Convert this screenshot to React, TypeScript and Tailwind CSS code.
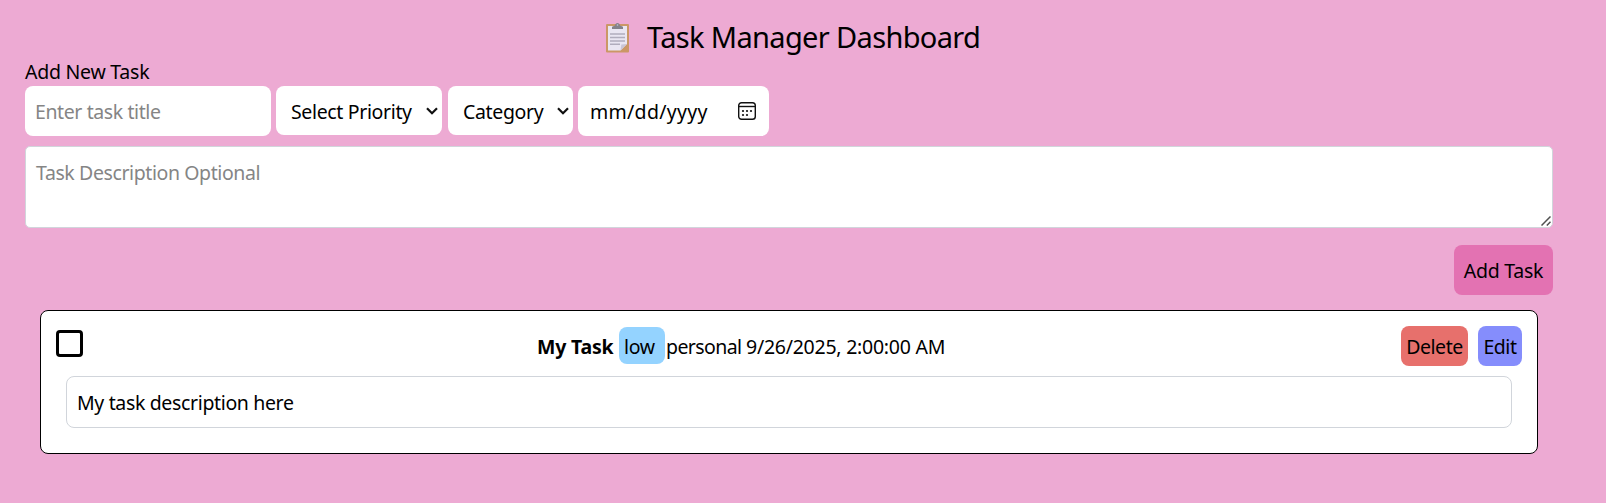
import React from 'react';

function ClipboardIcon() {
  return (
    <svg width="23" height="30" viewBox="0 0 23 30" className="shrink-0" aria-hidden="true">
      <rect x="0" y="1" width="23" height="28.500" rx="1" fill="#cb9766" />
      <path d="M2 3h19v18l-6.500 6.500H2z" fill="#e9e6f2" />
      <path d="M21 21l-6.500 6.500 0.800-6z" fill="#c9c5d6" />
      <path d="M6 6V3.800l3-1.200C9.200 1 10.200 0 11.500 0s2.300 1 2.500 2.600l3 1.200V6z" fill="#84828b" />
      <circle cx="11.500" cy="2" r="0.800" fill="#c9c5d6" />
      <path d="M4 11h15M4 14.500h15M4 18h15M4 21.300h10" stroke="#b0adbd" strokeWidth="1.400" />
    </svg>
  );
}

function Chevron() {
  return (
    <svg width="12" height="8" viewBox="0 0 12 8" className="shrink-0" aria-hidden="true">
      <path d="M1 1.200l5 5 5-5" fill="none" stroke="#101010" strokeWidth="2.200" />
    </svg>
  );
}

function CalendarIcon() {
  return (
    <svg width="18" height="18" viewBox="0 0 18 18" className="shrink-0" aria-hidden="true">
      <rect x="0.700" y="0.700" width="16.600" height="16.600" rx="2.800" fill="none" stroke="#111" strokeWidth="1.400" />
      <path d="M1 4.500h16" stroke="#111" strokeWidth="1.400" />
      <g fill="#111">
        <circle cx="5" cy="9" r="1.100" />
        <circle cx="9" cy="9" r="1.100" />
        <circle cx="13" cy="9" r="1.100" />
        <circle cx="5" cy="13" r="1.100" />
        <circle cx="9" cy="13" r="1.100" />
      </g>
    </svg>
  );
}

export default function App() {
  return (
    <main className="h-[503px] overflow-hidden bg-[#edaad3] pl-[25px] pr-[53px] pt-[19px] font-['Noto_Sans',sans-serif] text-[19.5px] leading-[30px] tracking-[-0.35px] text-black">
      <h1 className="flex h-[39px] items-start pl-[581px] text-[29px] leading-[36px] tracking-[-0.65px]">
        <span className="mt-[3.5px]"><ClipboardIcon /></span>
        <span className="ml-[18px] whitespace-nowrap">Task Manager Dashboard</span>
      </h1>
      <h2 className="h-[28px] leading-[28px] tracking-[-0.25px]">Add New Task</h2>
      <div className="flex h-[50px] items-start">
        <input
          className="h-[50px] w-[246px] rounded-lg bg-white px-[10px] pt-px tracking-[-0.4px] outline-none placeholder:text-[#858585]"
          placeholder="Enter task title"
        />
        <button className="ml-[5px] flex h-[49px] w-[166px] items-center justify-between rounded-lg bg-white pl-[15px] pr-[4px]">
          <span className="whitespace-nowrap pt-[2px]">Select Priority</span>
          <Chevron />
        </button>
        <button className="ml-[6px] flex h-[49px] w-[125px] items-center justify-between rounded-lg bg-white pl-[15px] pr-[4px]">
          <span className="pt-[2px]">Category</span>
          <Chevron />
        </button>
        <button className="ml-[5px] flex h-[50px] w-[191px] items-center justify-between rounded-lg bg-white pl-[12px] pr-[13px]">
          <span className="pt-[2px] tracking-[0.3px]">mm/dd/yyyy</span>
          <CalendarIcon />
        </button>
      </div>
      <div className="relative mt-[10px]">
        <textarea
          className="block h-[82px] w-full resize-none rounded-[5px] border border-[#d1d5db] bg-white px-[10px] py-[11px] tracking-[-0.4px] outline-none placeholder:text-[#858585]"
          placeholder="Task Description Optional"
        />
        <svg width="10" height="10" viewBox="0 0 10 10" className="absolute bottom-[2px] right-[2px]" aria-hidden="true">
          <path d="M0.500 9.500l9-9M5.800 9.500l3.700-3.700" fill="none" stroke="#505050" strokeWidth="1.500" />
        </svg>
      </div>
      <div className="mt-[17px] flex justify-end">
        <button className="h-[50px] w-[99px] whitespace-nowrap rounded-lg bg-[#e372b2] pt-[2px] tracking-[-0.25px]">Add Task</button>
      </div>
      <section className="ml-[15px] mr-[15px] mt-[15px] h-[144px] rounded-lg border border-black bg-white pl-[15px] pr-[15px] pt-[15px]">
        <div className="flex h-[40px] items-start">
          <span className="mt-[4px] h-[27px] w-[27px] rounded-[4px] border-[3px] border-black" role="checkbox" aria-checked="false" />
          <div className="ml-[454px] flex items-start whitespace-nowrap">
            <strong className="mt-[6px] w-[82px] tracking-[-0.2px]">My Task</strong>
            <span className="mt-px h-[37px] w-[46px] rounded-lg bg-[#94d3ff] pl-[5px] leading-[40px]">low</span>
            <span className="mt-[6px] w-[81px] pl-px tracking-[-0.6px]">personal</span>
            <span className="mt-[6px] tracking-[-0.25px]">9/26/2025, 2:00:00 AM</span>
          </div>
          <div className="ml-auto flex gap-[10px]">
            <button className="h-[40px] w-[67px] rounded-lg bg-[#e7706c] pt-[2px] tracking-[-0.45px]">Delete</button>
            <button className="h-[40px] w-[44px] rounded-lg bg-[#858dfc] pt-[2px] tracking-[-0.45px]">Edit</button>
          </div>
        </div>
        <p className="ml-[10px] mr-[10px] mt-[10px] h-[52px] rounded-lg border border-[#d1d5db] px-[10px] leading-[52px]">My task description here</p>
      </section>
    </main>
  );
}
